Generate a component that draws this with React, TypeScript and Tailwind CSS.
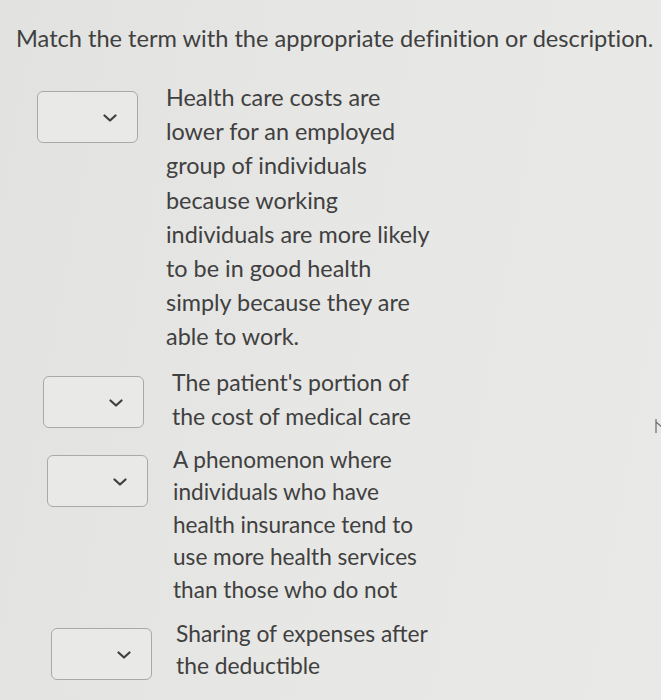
import type { ReactNode } from 'react';

interface MatchRowProps {
  rowClass: string;
  textClass: string;
  lines: string[];
}

function Chevron() {
  return (
    <svg width="14" height="8" viewBox="0 0 14 8" fill="none" className="absolute right-[20px] top-[22px]">
      <path d="M1.5 1.5 L7 6.5 L12.5 1.5" stroke="#3f3f3f" strokeWidth="2.2" strokeLinecap="round" strokeLinejoin="round" />
    </svg>
  );
}

function SelectBox() {
  return (
    <div className="relative mt-[11px] h-[52px] w-[101px] shrink-0 rounded-[6px] border border-[#a9a9a7] bg-[#e9e9e7]">
      <Chevron />
    </div>
  );
}

function MatchRow({ rowClass, textClass, lines }: MatchRowProps) {
  return (
    <div className={`flex ${rowClass}`}>
      <SelectBox />
      <div className={textClass}>
        {lines.map((line) => (
          <div key={line} className="whitespace-nowrap">{line}</div>
        ))}
      </div>
    </div>
  );
}

function Page({ children }: { children: ReactNode }) {
  return (
    <div className="relative min-h-[700px] overflow-hidden bg-[linear-gradient(100deg,#e2e2e0_0%,#e7e7e5_55%,#e9e9e7_100%)] font-['Lato','Noto_Sans',sans-serif] text-[#404040]">
      {children}
    </div>
  );
}

export default function App() {
  return (
    <Page>
      <p className="whitespace-nowrap pl-[16px] pt-[22px] text-[23.6px] leading-[32px] [font-variant-ligatures:none]">
        Match the term with the appropriate definition or description.
      </p>

      <div className="mt-[26px] flex flex-col gap-[11px]">
        <MatchRow
          rowClass="pl-[37px] gap-[28px]"
          textClass="text-[23.4px] leading-[34.2px]"
          lines={[
            'Health care costs are',
            'lower for an employed',
            'group of individuals',
            'because working',
            'individuals are more likely',
            'to be in good health',
            'simply because they are',
            'able to work.',
          ]}
        />
        <MatchRow
          rowClass="pl-[43px] gap-[28px]"
          textClass="text-[23px] leading-[34px]"
          lines={['The patient\'s portion of', 'the cost of medical care']}
        />
        <MatchRow
          rowClass="pl-[47px] gap-[25px]"
          textClass="text-[22.6px] leading-[32.5px]"
          lines={[
            'A phenomenon where',
            'individuals who have',
            'health insurance tend to',
            'use more health services',
            'than those who do not',
          ]}
        />
        <MatchRow
          rowClass="pl-[51px] gap-[24px]"
          textClass="text-[22.8px] leading-[32px]"
          lines={['Sharing of expenses after', 'the deductible']}
        />
      </div>

      <svg width="8" height="16" viewBox="0 0 8 16" fill="none" className="absolute left-[655px] top-[418px]">
        <path d="M1 1 V15 M1 4 L7 9" stroke="#6a6a6a" strokeWidth="1.2" />
      </svg>
    </Page>
  );
}
